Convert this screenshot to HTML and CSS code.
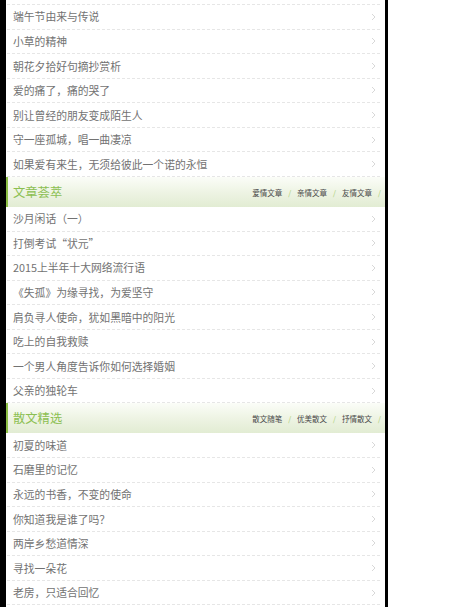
FILE: index.html
```html
<!DOCTYPE html>
<html lang="zh">
<head>
<meta charset="utf-8">
<link rel="stylesheet" href="styles.css">
</head>
<body>
<div class="frame">
  <div class="top-spacer"></div>
  <ul class="list">
    <li class="row"><span class="title">端午节由来与传说</span><svg class="chev" viewBox="0 0 5 8"><polyline points="1,1 4,4 1,7"/></svg></li>
    <li class="row"><span class="title">小草的精神</span><svg class="chev" viewBox="0 0 5 8"><polyline points="1,1 4,4 1,7"/></svg></li>
    <li class="row"><span class="title">朝花夕拾好句摘抄赏析</span><svg class="chev" viewBox="0 0 5 8"><polyline points="1,1 4,4 1,7"/></svg></li>
    <li class="row"><span class="title">爱的痛了，痛的哭了</span><svg class="chev" viewBox="0 0 5 8"><polyline points="1,1 4,4 1,7"/></svg></li>
    <li class="row"><span class="title">别让曾经的朋友变成陌生人</span><svg class="chev" viewBox="0 0 5 8"><polyline points="1,1 4,4 1,7"/></svg></li>
    <li class="row"><span class="title">守一座孤城，唱一曲凄凉</span><svg class="chev" viewBox="0 0 5 8"><polyline points="1,1 4,4 1,7"/></svg></li>
    <li class="row"><span class="title">如果爱有来生，无须给彼此一个诺的永恒</span><svg class="chev" viewBox="0 0 5 8"><polyline points="1,1 4,4 1,7"/></svg></li>
  </ul>
  <div class="section-head">
    <span class="section-title">文章荟萃</span>
    <span class="tags"><span class="tag">爱情文章</span><span class="sep">/</span><span class="tag">亲情文章</span><span class="sep">/</span><span class="tag">友情文章</span><span class="sep last">/</span></span>
  </div>
  <ul class="list">
    <li class="row"><span class="title">沙月闲话（一）</span><svg class="chev" viewBox="0 0 5 8"><polyline points="1,1 4,4 1,7"/></svg></li>
    <li class="row"><span class="title">打倒考试“状元”</span><svg class="chev" viewBox="0 0 5 8"><polyline points="1,1 4,4 1,7"/></svg></li>
    <li class="row"><span class="title">2015上半年十大网络流行语</span><svg class="chev" viewBox="0 0 5 8"><polyline points="1,1 4,4 1,7"/></svg></li>
    <li class="row"><span class="title">《失孤》为缘寻找，为爱坚守</span><svg class="chev" viewBox="0 0 5 8"><polyline points="1,1 4,4 1,7"/></svg></li>
    <li class="row"><span class="title">肩负寻人使命，犹如黑暗中的阳光</span><svg class="chev" viewBox="0 0 5 8"><polyline points="1,1 4,4 1,7"/></svg></li>
    <li class="row"><span class="title">吃上的自我救赎</span><svg class="chev" viewBox="0 0 5 8"><polyline points="1,1 4,4 1,7"/></svg></li>
    <li class="row"><span class="title">一个男人角度告诉你如何选择婚姻</span><svg class="chev" viewBox="0 0 5 8"><polyline points="1,1 4,4 1,7"/></svg></li>
    <li class="row"><span class="title">父亲的独轮车</span><svg class="chev" viewBox="0 0 5 8"><polyline points="1,1 4,4 1,7"/></svg></li>
  </ul>
  <div class="section-head">
    <span class="section-title">散文精选</span>
    <span class="tags"><span class="tag">散文随笔</span><span class="sep">/</span><span class="tag">优美散文</span><span class="sep">/</span><span class="tag">抒情散文</span><span class="sep last">/</span></span>
  </div>
  <ul class="list">
    <li class="row"><span class="title">初夏的味道</span><svg class="chev" viewBox="0 0 5 8"><polyline points="1,1 4,4 1,7"/></svg></li>
    <li class="row"><span class="title">石磨里的记忆</span><svg class="chev" viewBox="0 0 5 8"><polyline points="1,1 4,4 1,7"/></svg></li>
    <li class="row"><span class="title">永远的书香，不变的使命</span><svg class="chev" viewBox="0 0 5 8"><polyline points="1,1 4,4 1,7"/></svg></li>
    <li class="row"><span class="title">你知道我是谁了吗？</span><svg class="chev" viewBox="0 0 5 8"><polyline points="1,1 4,4 1,7"/></svg></li>
    <li class="row"><span class="title">两岸乡愁道情深</span><svg class="chev" viewBox="0 0 5 8"><polyline points="1,1 4,4 1,7"/></svg></li>
    <li class="row"><span class="title">寻找一朵花</span><svg class="chev" viewBox="0 0 5 8"><polyline points="1,1 4,4 1,7"/></svg></li>
    <li class="row"><span class="title">老房，只适合回忆</span><svg class="chev" viewBox="0 0 5 8"><polyline points="1,1 4,4 1,7"/></svg></li>
  </ul>
</div>
</body>
</html>
```

FILE: styles.css
```css
html, body {
  margin: 0;
  padding: 0;
  background: #fff;
}
body {
  font-family: "Noto Sans CJK SC", "Noto Sans", sans-serif;
  height: 607px;
  overflow: hidden;
}
.frame {
  width: 379px;
  border-left: 6px solid #000;
  border-right: 3px solid #000;
  min-height: 607px;
  box-sizing: content-box;
}
.top-spacer {
  height: 4px;
  margin: 0 5px 0 1px;
  border-bottom: 1px dashed #e6e6e6;
}
.list {
  list-style: none;
  margin: 0;
  padding: 0;
}
.row {
  height: 23.57px;
  margin: 0 5px 0 1px;
  border-bottom: 1px dashed #e6e6e6;
  display: flex;
  align-items: center;
  justify-content: space-between;
  padding-left: 6px;
  padding-right: 4px;
}
.title {
  font-size: 10.8px;
  color: #727272;
  line-height: 1;
  white-space: nowrap;
}
.chev {
  width: 5px;
  height: 8px;
  fill: none;
  stroke: #d4d4d4;
  stroke-width: 0.9;
}
.section-head {
  height: 30px;
  border-left: 2px solid #8dbf45;
  background: linear-gradient(to bottom, #fbfdf8 0%, #eef4e4 50%, #e2ecd3 100%);
  display: flex;
  align-items: center;
  justify-content: space-between;
  padding-left: 5px;
  padding-right: 4px;
}
.section-title {
  font-size: 12.3px;
  color: #8cbf52;
  line-height: 1;
}
.tags {
  display: flex;
  align-items: center;
  flex-shrink: 0;
  font-size: 7.5px;
  line-height: 1;
  color: #4a4a4a;
  padding-top: 1px;
  white-space: nowrap;
}
.sep {
  color: #a9cf73;
  margin: 0 6px;
}
.sep.last {
  margin-right: 0;
}
```
